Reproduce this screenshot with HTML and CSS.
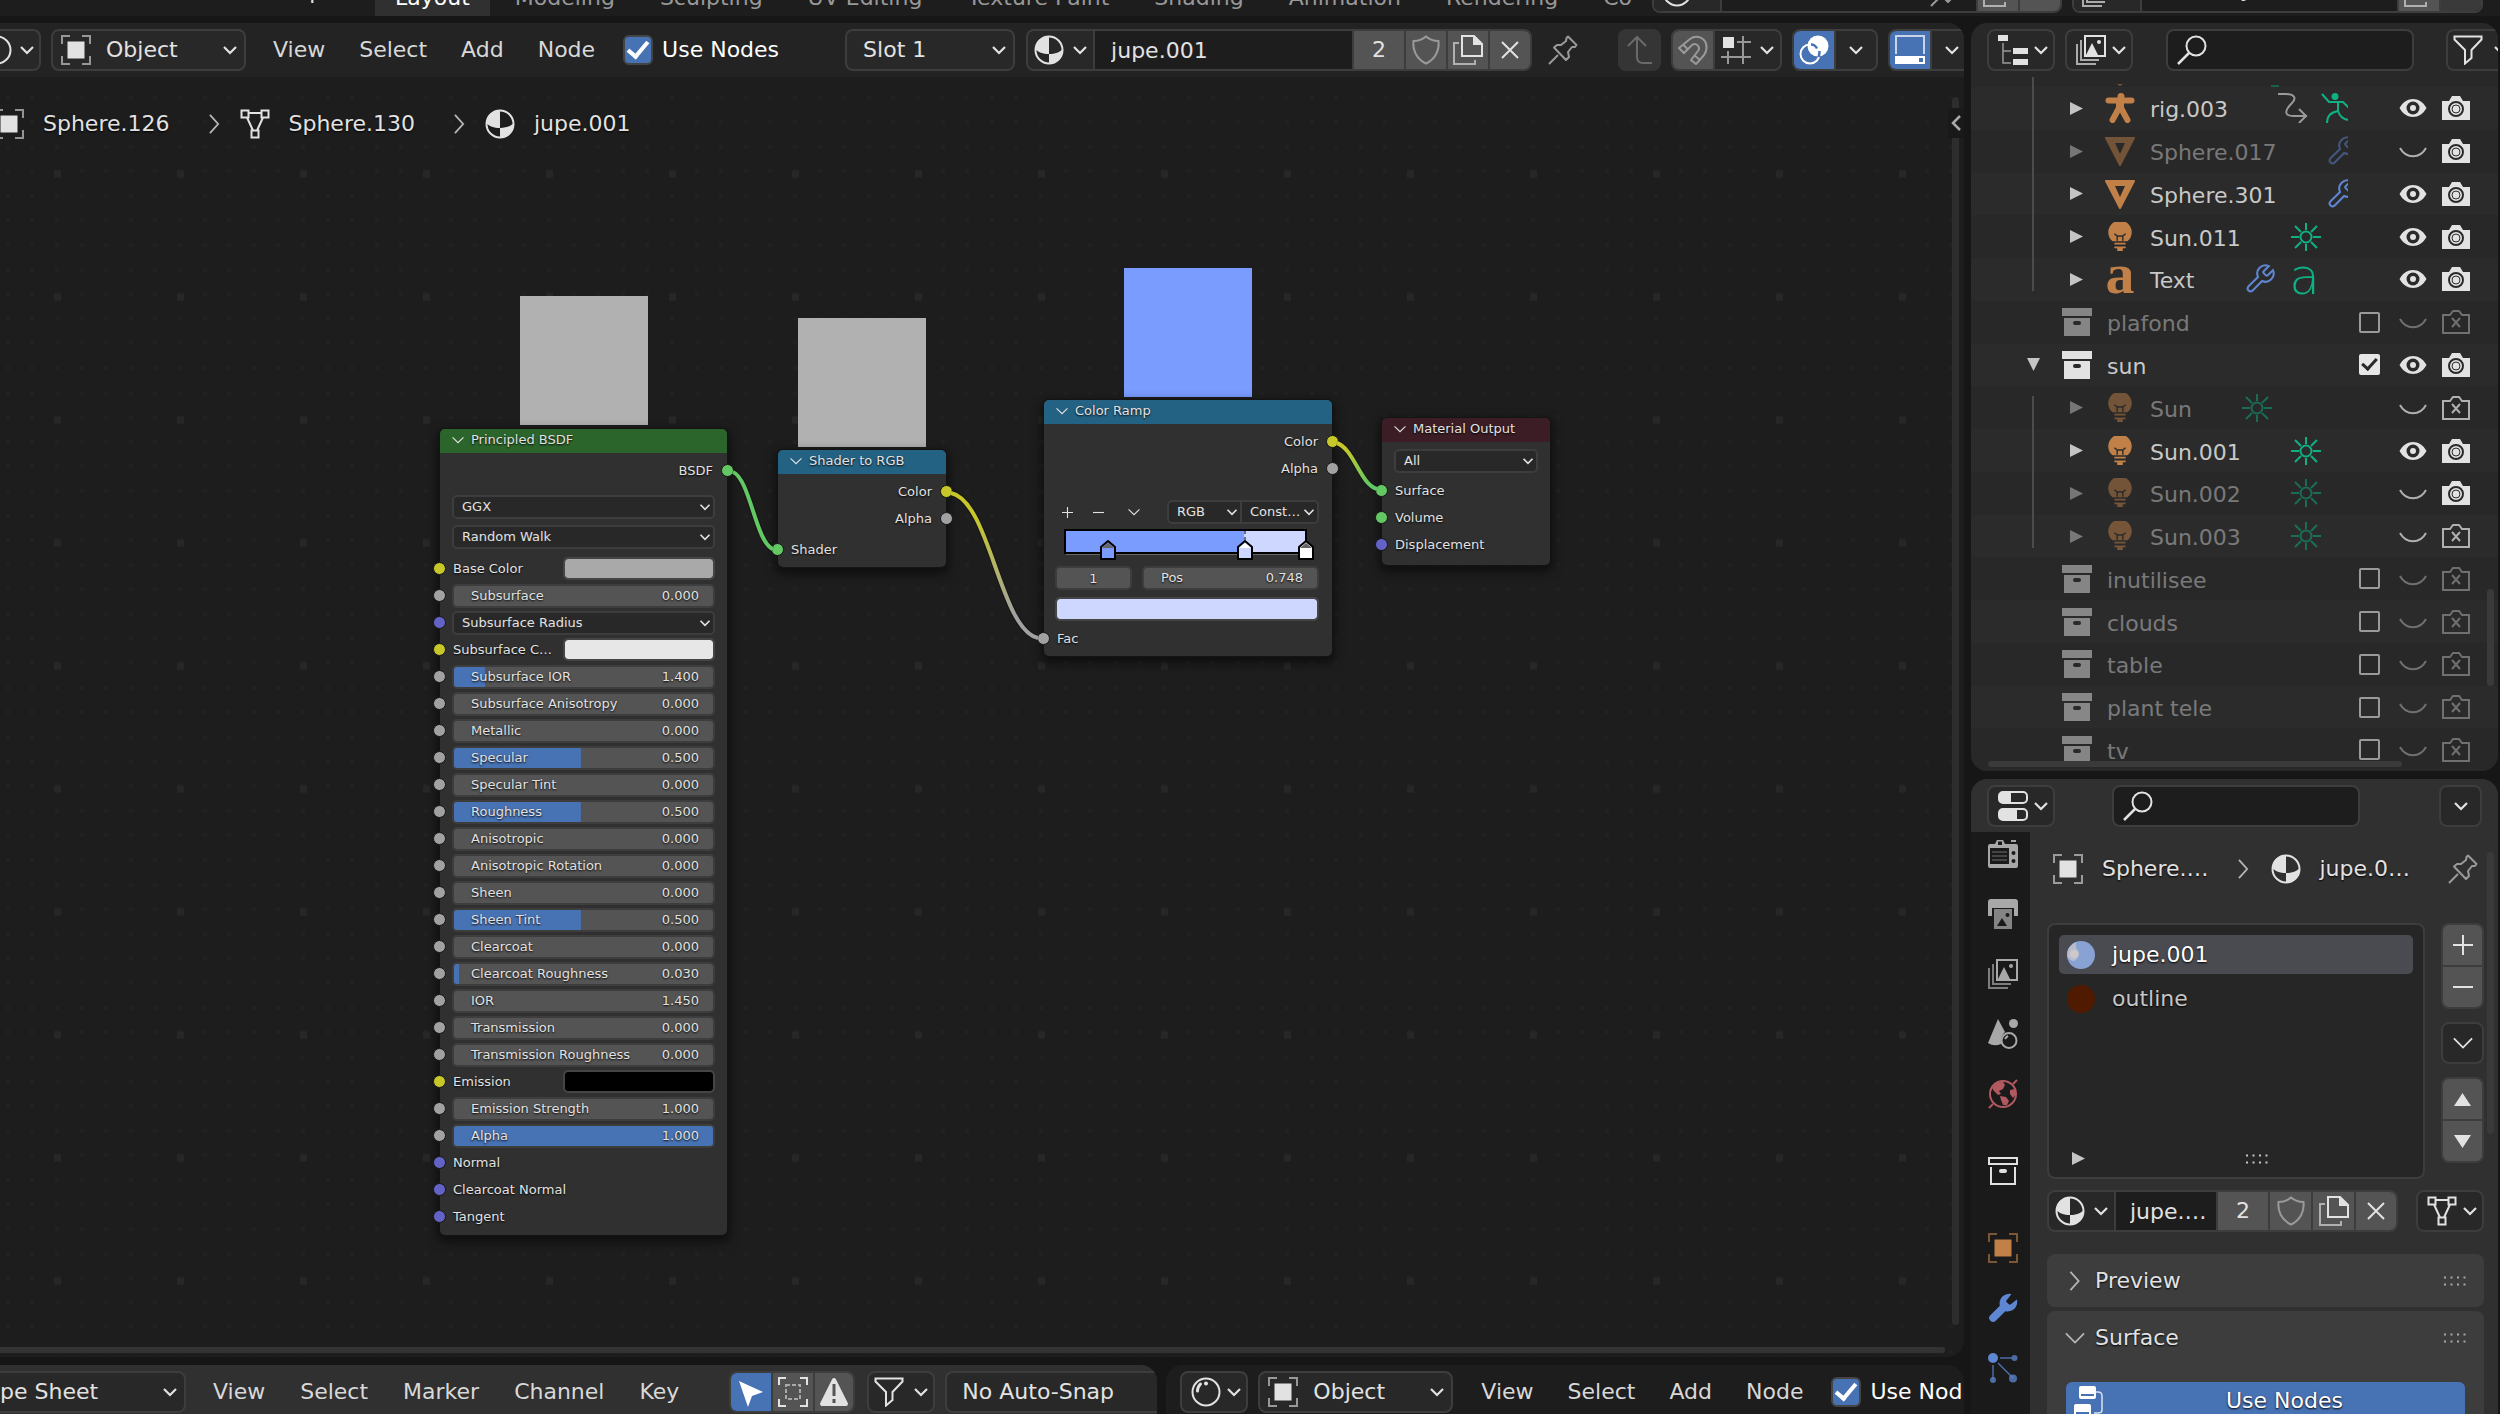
FILE: index.html
```html
<!DOCTYPE html>
<html lang="en">
<head>
<meta charset="utf-8">
<title>Shader Editor</title>
<link rel="stylesheet" href="styles.css">
</head>
<body>
<svg class="defs" aria-hidden="true">
  <symbol id="chev" viewBox="0 0 16 16"><path d="M2 5l6 6 6-6" fill="none" stroke="currentColor" stroke-width="2.2"/></symbol>
  <symbol id="chev-r" viewBox="0 0 12 22"><path d="M1 1l9 10-9 10" fill="none" stroke="currentColor" stroke-width="2"/></symbol>
  <symbol id="chev-l" viewBox="0 0 10 16"><path d="M9 1L2 8l7 7" fill="none" stroke="currentColor" stroke-width="2.5"/></symbol>
  <symbol id="chev-d" viewBox="0 0 22 12"><path d="M1 1l10 10L21 1" fill="none" stroke="currentColor" stroke-width="2"/></symbol>
  <symbol id="tri-r" viewBox="0 0 13 13"><path d="M0 0l13 6.500L0 13z" fill="currentColor"/></symbol>
  <symbol id="tri-d" viewBox="0 0 13 13"><path d="M0 0h13L6.500 13z" fill="currentColor"/></symbol>
  <symbol id="grip" viewBox="0 0 22 10"><path d="M0 1.500h22M0 8.500h22" stroke="currentColor" stroke-width="2" stroke-dasharray="2 4.500"/></symbol>
  <symbol id="obj" viewBox="0 0 30 30"><path d="M1 9V1h8M21 1h8v8M29 21v8h-8M9 29H1v-8" fill="none" stroke="currentColor" stroke-width="2" opacity=".6"/><path d="M6.500 6.500h17v17h-17z" fill="currentColor"/></symbol>
  <symbol id="mesh" viewBox="0 0 30 30"><path d="M1.500 1.500h7v7h-7zM21.500 1.500h7v7h-7zM11.500 21.500h7v7h-7zM8.500 4h13M7 8.500l6 13M23 8.500l-6 13" fill="none" stroke="currentColor" stroke-width="2"/></symbol>
  <symbol id="mat" viewBox="0 0 30 30"><circle cx="15" cy="15" r="13.500" fill="none" stroke="currentColor" stroke-width="2"/><path d="M15 1v18C9 19 4 17 1 14 2 6 8 1 15 1zM15 19c6 0 11-2 14-5 0 9-6 15-14 15z" fill="currentColor"/></symbol>
  <symbol id="sphere" viewBox="0 0 30 30"><circle cx="15" cy="15" r="13.500" fill="none" stroke="currentColor" stroke-width="2"/><path d="M6.500 14c0-3 1-5 3-7" fill="none" stroke="currentColor" stroke-width="3" stroke-linecap="round"/><circle cx="15" cy="6.500" r="2" fill="currentColor"/></symbol>
  <symbol id="shield" viewBox="0 0 30 30"><path d="M15 1.500C11 5 7 6 2.500 6c-1 9 3 18 12.500 22.500C24.500 24 28.500 15 27.500 6c-4.500 0-8.500-1-12.500-4.500z" fill="none" stroke="currentColor" stroke-width="2"/></symbol>
  <symbol id="copy" viewBox="0 0 30 30"><path d="M6 8H1v21h21v-4" fill="none" stroke="currentColor" stroke-width="2" opacity=".65"/><path d="M9 1h12l8 8v12H9z" fill="none" stroke="currentColor" stroke-width="2"/><path d="M20 0l10 10H20z" fill="currentColor"/></symbol>
  <symbol id="x" viewBox="0 0 30 30"><path d="M7 7l16 16M23 7L7 23" stroke="currentColor" stroke-width="2"/></symbol>
  <symbol id="pin" viewBox="0 0 30 30"><path d="M1 29l9-9M20 1.500l8.500 8.500-1.500 2h-3l-4 5 1 5-3 3L6 12.500 9 10h4l5-4 .500-3z" fill="none" stroke="currentColor" stroke-width="2" stroke-linejoin="round"/></symbol>
  <symbol id="up" viewBox="0 0 30 30"><path d="M12 2v20q0 6 6 6h9M3 11l9-9 9 9" fill="none" stroke="currentColor" stroke-width="2"/></symbol>
  <symbol id="magnet" viewBox="0 0 30 30"><path d="M1 13L12 4C19-1 29 3 28.500 13c0 5-3 8-10.500 16l-5-4 7-9c3-4-2-9-6-6l-8 8z" fill="none" stroke="currentColor" stroke-width="2"/><path d="M5 9.500l5 5M16.500 20.500l5 4" stroke="currentColor" stroke-width="2"/></symbol>
  <symbol id="snap" viewBox="0 0 30 30"><path d="M22 1v28M16 7h14M7 16v13M0 22h30" stroke="currentColor" stroke-width="2" opacity=".6"/><path d="M2 2h11v11H2z" fill="currentColor"/></symbol>
  <symbol id="overlay" viewBox="0 0 30 30"><circle cx="11" cy="19" r="9.500" fill="none" stroke="#fff" stroke-width="2"/><circle cx="19" cy="11" r="10.500" fill="#fff"/><path d="M12 9.500q4 0 6 4M20.500 16q0 4-1 6" fill="none" stroke="#4772b3" stroke-width="2.500"/></symbol>
  <symbol id="backdrop" viewBox="0 0 30 30"><path d="M1 19V1h28v18" fill="none" stroke="#fff" stroke-width="2" opacity=".7"/><path d="M0 21h30v8H0z" fill="#fff"/><path d="M24 23h4v4h-4z" fill="#4772b3"/></symbol>
  <symbol id="tree" viewBox="0 0 30 30"><path d="M5 8v20h8M5 16h8" fill="none" stroke="currentColor" stroke-width="1.500" opacity=".6"/><path d="M0 0h10v6H0zM15 13h15v6H15zM15 24h15v6H15z" fill="currentColor"/></symbol>
  <symbol id="imgs" viewBox="0 0 30 30"><path d="M5 5v20h18M1 9v20h19" fill="none" stroke="currentColor" stroke-width="2" opacity=".7"/><path d="M9 1h20v20H9z" fill="none" stroke="currentColor" stroke-width="2"/><path d="M10 20l6-12 6 12z" fill="currentColor"/><circle cx="23" cy="7" r="2" fill="currentColor"/></symbol>
  <symbol id="search" viewBox="0 0 30 30"><circle cx="19" cy="11" r="9.500" fill="none" stroke="currentColor" stroke-width="2"/><path d="M12.500 17.500L1 29" stroke="currentColor" stroke-width="2.500"/></symbol>
  <symbol id="funnel" viewBox="0 0 30 30"><path d="M1.500 1.500h27v3L18.500 15v8L12 28.500V15L1.500 4.500z" fill="none" stroke="currentColor" stroke-width="2"/></symbol>
  <symbol id="toggles" viewBox="0 0 30 30"><rect x="1" y="1" width="28" height="11" rx="4" fill="none" stroke="currentColor" stroke-width="2"/><path d="M5 1h8v11H5q-4 0-4-4V5q0-4 4-4zM5 18h14v11H5q-4 0-4-4v-3q0-4 4-4z" fill="currentColor"/><rect x="1" y="18" width="28" height="11" rx="4" fill="none" stroke="currentColor" stroke-width="2"/></symbol>
  <symbol id="eye" viewBox="0 0 30 30"><path d="M1.500 15C8 3 22 3 28.500 15 22 27 8 27 1.500 15z" fill="currentColor"/><circle cx="15" cy="15" r="6.500" fill="#2a2a2a"/><circle cx="15" cy="15" r="3" fill="currentColor"/></symbol>
  <symbol id="shut" viewBox="0 0 30 30"><path d="M2 12C8 23 22 23 28 12" fill="none" stroke="currentColor" stroke-width="2"/></symbol>
  <symbol id="cam" viewBox="0 0 30 30"><path d="M1 8h7l3-5h8l3 5h7v19H1z" fill="currentColor"/><circle cx="15" cy="16" r="7" fill="none" stroke="#2a2a2a" stroke-width="2"/><circle cx="15" cy="16" r="4" fill="none" stroke="#2a2a2a" stroke-width="1"/></symbol>
  <symbol id="camoff" viewBox="0 0 30 30"><path d="M2 8h7l3-4h6l3 4h7v18H2z" fill="none" stroke="currentColor" stroke-width="2"/><path d="M11 11l8 9M19 11l-8 9" stroke="currentColor" stroke-width="2"/></symbol>
  <symbol id="coll" viewBox="0 0 30 30"><path d="M0 1h30v8H0zM2 11h26v18H2z" fill="currentColor"/><rect x="11" y="14" width="8" height="4" rx="2" fill="#2a2a2a"/></symbol>
  <symbol id="coll-o" viewBox="0 0 30 30"><path d="M1 2h28v6H1zM3 11v17h24V11" fill="none" stroke="currentColor" stroke-width="2"/><rect x="11" y="13" width="8" height="4" rx="2" fill="currentColor"/></symbol>
  <symbol id="bulb" viewBox="0 0 30 32"><path d="M7 20.500A12.500 12.500 0 1 1 23 20.500zM9 22h12v2H9zM9 26h12v2H9zM12 28h6v3h-6z" fill="currentColor"/><path d="M9 12.500l3 2.500h6l3-2.500M12 14v6M18 14v6" fill="none" stroke="#2a2a2a" stroke-width="1.500"/></symbol>
  <symbol id="sun" viewBox="0 0 30 30"><circle cx="15" cy="15" r="5.500" fill="none" stroke="currentColor" stroke-width="2"/><path d="M15 8V1M15 22v7M8 15H0M22 15h8M10 10L4 4M20 10l6-6M10 20l-6 6M20 20l6 6" stroke="currentColor" stroke-width="2"/></symbol>
  <symbol id="wrench" viewBox="1 1 22 22"><path d="M14.700 6.300a1 1 0 0 0 0 1.400l1.600 1.600a1 1 0 0 0 1.400 0l3.770-3.770a6 6 0 0 1-7.940 7.940l-6.910 6.910a2.120 2.120 0 0 1-3-3l6.910-6.910a6 6 0 0 1 7.940-7.940l-3.760 3.760z" fill="none" stroke="currentColor" stroke-width="1.500"/></symbol>
  <symbol id="wrench-f" viewBox="1 1 22 22"><path d="M14.700 6.300a1 1 0 0 0 0 1.400l1.600 1.600a1 1 0 0 0 1.400 0l4.500-3.500a7 7 0 0 1-8.500 8.500l-7 7a2.600 2.600 0 0 1-4-4l7-7a7 7 0 0 1 8.500-8.500z" fill="currentColor"/></symbol>
  <symbol id="cone" viewBox="0 0 30 30"><path d="M1 2h28L15 29z" fill="currentColor" stroke="currentColor" stroke-width="2" stroke-linejoin="round"/><path d="M10 7h10l-5 11z" fill="#2a2a2a"/></symbol>
  <symbol id="rig" viewBox="0 0 30 30"><circle cx="16" cy="3.500" r="3.500" fill="currentColor"/><path d="M3.500 7.500h23" stroke="currentColor" stroke-width="6" stroke-linecap="round"/><path d="M11 8h8v9h-8z" fill="currentColor"/><path d="M14 15L7.500 27M16 15l6.500 12" stroke="currentColor" stroke-width="6" stroke-linecap="round"/></symbol>
  <symbol id="pose" viewBox="0 0 30 30"><circle cx="14" cy="3.500" r="3.500" fill="currentColor"/><path d="M1 1l7 8h9l5 0 7 7M17 9v9Q6 20 6 30M17 18q3 9 12 9" fill="none" stroke="currentColor" stroke-width="2"/></symbol>
  <symbol id="path" viewBox="0 0 30 30"><path d="M0 1h8c8 0 11 4 6 9-8 8-8 13 2 13h13M21 16l7 7-7 7" fill="none" stroke="currentColor" stroke-width="2"/></symbol>
  <symbol id="cursor" viewBox="0 0 30 30"><path d="M3 4l24 11-11 4-4 11z" fill="#fff"/></symbol>
  <symbol id="dashed" viewBox="0 0 30 30"><path d="M1 8V1h7M22 1h7v7M29 22v7h-7M8 29H1v-7" fill="none" stroke="currentColor" stroke-width="2"/><path d="M8 8h14v14H8z" fill="none" stroke="currentColor" stroke-width="2" stroke-dasharray="4 2" opacity=".6"/></symbol>
  <symbol id="warn" viewBox="0 0 30 30"><path d="M15 3L3 27h24z" fill="currentColor" stroke="currentColor" stroke-width="4" stroke-linejoin="round"/><path d="M15 7v12M15 22v4" stroke="#545454" stroke-width="3"/></symbol>
  <symbol id="render" viewBox="0 0 30 30"><path d="M2 5h5l2-4h6l2 4h11q2 0 2 2v20q0 2-2 2H2q-2 0-2-2V7q0-2 2-2zM23 1h5v2h-5z" fill="currentColor"/><path d="M2 9h19v16H2zM10 2.500h4V6h-4z" fill="#1a1a1a"/><path d="M4 13h15M4 17h15M4 21h15" stroke="currentColor" stroke-width="1" opacity=".6"/><circle cx="25.500" cy="14" r="2" fill="#1a1a1a"/><circle cx="25.500" cy="22" r="2" fill="#1a1a1a"/></symbol>
  <symbol id="print" viewBox="0 0 30 30"><path d="M3 0h24q3 0 3 3v14h-4V9H4v8H0V3q0-3 3-3z" fill="currentColor"/><path d="M6 10h18v20H6z" fill="currentColor" opacity=".75"/><path d="M9 27l5-8 5 8z" fill="#1a1a1a"/><circle cx="19.500" cy="16" r="2" fill="#1a1a1a"/></symbol>
  <symbol id="scene" viewBox="0 0 30 30"><path d="M10 0l7 13q-5 4-4 12-7 3-13-1z" fill="currentColor"/><circle cx="25.500" cy="4.500" r="4.500" fill="currentColor"/><circle cx="21" cy="21.500" r="7.500" fill="none" stroke="currentColor" stroke-width="2"/><path d="M17 20q1-2 3-3" stroke="currentColor" stroke-width="2" fill="none"/></symbol>
  <symbol id="world" viewBox="0 0 30 30"><circle cx="15" cy="15" r="13" fill="none" stroke="currentColor" stroke-width="2"/><path d="M25 5l4-4M5 25l-4 4" stroke="currentColor" stroke-width="2"/><path d="M4 9Q8 2 15 3l2 3-2 4-4 2 2 3-3 1-4-4zM12 17l6 1 3 4-2 4h-4l-2-5zM22 11l5-1 1 5-3 4-3-4z" fill="currentColor"/></symbol>
  <symbol id="parts" viewBox="0 0 30 30"><path d="M12 5h12M5 12v14M10 10l15 15" stroke="currentColor" stroke-width="1.500" opacity=".75"/><circle cx="5" cy="5" r="5" fill="currentColor"/><g fill="currentColor" opacity=".75"><circle cx="26.500" cy="5" r="3"/><circle cx="5" cy="27" r="3"/><circle cx="25" cy="25.500" r="4"/></g></symbol>
  <symbol id="nodes" viewBox="0 0 30 30"><path d="M22 6h2q4 0 4 4v14q0 3-4 3h-4" fill="none" stroke="#fff" stroke-width="1.500" opacity=".8"/><rect x="5" y="0" width="17" height="13" rx="2" fill="#fff"/><rect x="0" y="18" width="17" height="13" rx="2" fill="#fff"/><path d="M7 9h13M2 27h13" stroke="#4772b3" stroke-width="2"/></symbol>
  <symbol id="plus" viewBox="0 0 20 20"><path d="M10 0v20M0 10h20" stroke="currentColor" stroke-width="2"/></symbol>
  <symbol id="minus" viewBox="0 0 20 20"><path d="M0 10h20" stroke="currentColor" stroke-width="2"/></symbol>
</svg>

<header class="topbar">
  <nav class="workspaces" aria-label="Workspaces">
    <button class="menu-help">Help</button>
    <button class="tab tab-on">Layout</button>
    <button class="tab">Modeling</button>
    <button class="tab">Sculpting</button>
    <button class="tab">UV Editing</button>
    <button class="tab">Texture Paint</button>
    <button class="tab">Shading</button>
    <button class="tab">Animation</button>
    <button class="tab">Rendering</button>
    <button class="tab">Co</button>
  </nav>
  <div class="top-group scene-group">
    <button class="cell cell-icon" aria-label="Browse scene"><svg class="icon"><use href="#sphere"/></svg></button>
    <span class="cell cell-dark cell-grow cell-end"><svg class="icon dim"><use href="#pin"/></svg></span>
    <button class="cell cell-gray" aria-label="New scene"><svg class="icon"><use href="#copy"/></svg></button>
    <button class="cell cell-gray" aria-label="Delete scene"></button>
  </div>
  <div class="top-group layer-group">
    <button class="cell cell-icon" aria-label="Browse view layer"><svg class="icon"><use href="#imgs"/></svg></button>
    <span class="cell cell-dark cell-grow cell-text">ViewLayer</span>
    <button class="cell cell-gray" aria-label="New view layer"><svg class="icon"><use href="#copy"/></svg></button>
    <button class="cell cell-off" aria-label="Remove view layer"></button>
  </div>
</header>

<div class="workspace">
  <main class="left">
    <section class="editor" aria-label="Shader editor">
      <div class="bar">
        <button class="box type-cut" aria-label="Editor type"><svg class="icon"><use href="#sphere"/></svg><svg class="chev"><use href="#chev"/></svg></button>
        <div class="box drop object-drop"><svg class="icon"><use href="#obj"/></svg><select aria-label="Shader type"><option>Object</option></select><svg class="chev"><use href="#chev"/></svg></div>
        <nav class="menus"><button>View</button><button>Select</button><button>Add</button><button>Node</button></nav>
        <label class="check"><input type="checkbox" checked>Use Nodes</label>
        <div class="box drop slot-drop"><select aria-label="Slot"><option>Slot 1</option></select><svg class="chev"><use href="#chev"/></svg></div>
        <div class="box group mat-group">
          <button class="c66" aria-label="Browse material"><svg class="icon"><use href="#mat"/></svg><svg class="chev"><use href="#chev"/></svg></button>
          <input type="text" value="jupe.001" aria-label="Material name">
          <button class="gray c52">2</button>
          <button class="gray c42 dim" aria-label="Fake user"><svg class="icon"><use href="#shield"/></svg></button>
          <button class="gray c42" aria-label="New material"><svg class="icon"><use href="#copy"/></svg></button>
          <button class="gray c42" aria-label="Unlink"><svg class="icon"><use href="#x"/></svg></button>
        </div>
        <button class="plain pin-btn" aria-label="Pin"><svg class="icon"><use href="#pin"/></svg></button>
        <button class="box sq off" aria-label="Parent node tree"><svg class="icon"><use href="#up"/></svg></button>
        <div class="box group snap-group">
          <button class="gray c40 dim" aria-label="Snap"><svg class="icon"><use href="#magnet"/></svg></button>
          <button class="rest" aria-label="Snap to"><svg class="icon"><use href="#snap"/></svg><svg class="chev"><use href="#chev"/></svg></button>
        </div>
        <div class="box group over-group">
          <button class="blue c40" aria-label="Overlays"><svg class="icon"><use href="#overlay"/></svg></button>
          <button class="rest" aria-label="Overlay options"><svg class="chev"><use href="#chev"/></svg></button>
        </div>
        <div class="box group back-group">
          <button class="blue c40" aria-label="Backdrop"><svg class="icon"><use href="#backdrop"/></svg></button>
          <button class="rest" aria-label="Backdrop options"><svg class="chev"><use href="#chev"/></svg></button>
        </div>
      </div>

      <div class="canvas">
        <svg class="grid" aria-hidden="true">
          <defs>
            <pattern id="dots" width="123" height="123" patternUnits="userSpaceOnUse">
              <path id="dotrow" d="M55 94h4M80 94h4M104 94h4M6 94h4M30 94h4" stroke="#212121" stroke-width="4"/>
              <use href="#dotrow" y="-24"/><use href="#dotrow" y="-49"/><use href="#dotrow" y="-74"/><use href="#dotrow" y="25"/>
              <path d="M54 97h7" stroke="#272727" stroke-width="7"/>
            </pattern>
            <linearGradient id="yellow-gray" gradientUnits="userSpaceOnUse" x1="946" y1="415" x2="1043" y2="562"><stop offset=".2" stop-color="#c7c729"/><stop offset=".8" stop-color="#a1a1a1"/></linearGradient>
            <linearGradient id="yellow-green" gradientUnits="userSpaceOnUse" x1="1332" y1="365" x2="1382" y2="413"><stop offset=".2" stop-color="#c7c729"/><stop offset=".8" stop-color="#63c763"/></linearGradient>
          </defs>
          <rect width="100%" height="100%" fill="url(#dots)"/>
        </svg>

        <nav class="crumbs" aria-label="Path">
          <svg class="icon"><use href="#obj"/></svg><span>Sphere.126</span><svg class="sep"><use href="#chev-r"/></svg>
          <svg class="icon"><use href="#mesh"/></svg><span>Sphere.130</span><svg class="sep"><use href="#chev-r"/></svg>
          <svg class="icon"><use href="#mat"/></svg><span>jupe.001</span>
        </nav>

        <div class="preview preview-a"></div>
        <div class="preview preview-b"></div>
        <div class="preview preview-c"></div>

        <article class="node principled">
          <h2 class="green"><svg><use href="#chev-d"/></svg>Principled BSDF</h2>
          <div class="row out">BSDF<i class="sock so g"></i></div>
          <div class="pick tall first"><select aria-label="Distribution"><option>GGX</option></select><svg><use href="#chev"/></svg></div>
          <div class="pick tall"><select aria-label="Subsurface method"><option>Random Walk</option></select><svg><use href="#chev"/></svg></div>
          <div class="inputs">
            <div class="row"><i class="sock y"></i><label for="bc">Base Color</label><input id="bc" type="color" value="#a9a9a9"></div>
            <div class="row"><i class="sock"></i><div class="field" style="--v:0%"><input id="f1" type="range"><label for="f1">Subsurface</label><output>0.000</output></div></div>
            <div class="row"><i class="sock v"></i><div class="pick"><select aria-label="Subsurface Radius"><option>Subsurface Radius</option></select><svg><use href="#chev"/></svg></div></div>
            <div class="row"><i class="sock y"></i><label for="sc">Subsurface C…</label><input id="sc" type="color" value="#e7e7e7"></div>
            <div class="row"><i class="sock"></i><div class="field" style="--v:12%"><input id="f2" type="range"><label for="f2">Subsurface IOR</label><output>1.400</output></div></div>
            <div class="row"><i class="sock"></i><div class="field" style="--v:0%"><input id="f3" type="range"><label for="f3">Subsurface Anisotropy</label><output>0.000</output></div></div>
            <div class="row"><i class="sock"></i><div class="field" style="--v:0%"><input id="f4" type="range"><label for="f4">Metallic</label><output>0.000</output></div></div>
            <div class="row"><i class="sock"></i><div class="field" style="--v:49%"><input id="f5" type="range"><label for="f5">Specular</label><output>0.500</output></div></div>
            <div class="row"><i class="sock"></i><div class="field" style="--v:0%"><input id="f6" type="range"><label for="f6">Specular Tint</label><output>0.000</output></div></div>
            <div class="row"><i class="sock"></i><div class="field" style="--v:49%"><input id="f7" type="range"><label for="f7">Roughness</label><output>0.500</output></div></div>
            <div class="row"><i class="sock"></i><div class="field" style="--v:0%"><input id="f8" type="range"><label for="f8">Anisotropic</label><output>0.000</output></div></div>
            <div class="row"><i class="sock"></i><div class="field" style="--v:0%"><input id="f9" type="range"><label for="f9">Anisotropic Rotation</label><output>0.000</output></div></div>
            <div class="row"><i class="sock"></i><div class="field" style="--v:0%"><input id="f10" type="range"><label for="f10">Sheen</label><output>0.000</output></div></div>
            <div class="row"><i class="sock"></i><div class="field" style="--v:49%"><input id="f11" type="range"><label for="f11">Sheen Tint</label><output>0.500</output></div></div>
            <div class="row"><i class="sock"></i><div class="field" style="--v:0%"><input id="f12" type="range"><label for="f12">Clearcoat</label><output>0.000</output></div></div>
            <div class="row"><i class="sock"></i><div class="field" style="--v:2%"><input id="f13" type="range"><label for="f13">Clearcoat Roughness</label><output>0.030</output></div></div>
            <div class="row"><i class="sock"></i><div class="field" style="--v:0%"><input id="f14" type="range"><label for="f14">IOR</label><output>1.450</output></div></div>
            <div class="row"><i class="sock"></i><div class="field" style="--v:0%"><input id="f15" type="range"><label for="f15">Transmission</label><output>0.000</output></div></div>
            <div class="row"><i class="sock"></i><div class="field" style="--v:0%"><input id="f16" type="range"><label for="f16">Transmission Roughness</label><output>0.000</output></div></div>
            <div class="row"><i class="sock y"></i><label for="em">Emission</label><input id="em" type="color" value="#000000"></div>
            <div class="row"><i class="sock"></i><div class="field" style="--v:0%"><input id="f17" type="range"><label for="f17">Emission Strength</label><output>1.000</output></div></div>
            <div class="row"><i class="sock"></i><div class="field" style="--v:100%"><input id="f18" type="range"><label for="f18">Alpha</label><output>1.000</output></div></div>
            <div class="row"><i class="sock v"></i>Normal</div>
            <div class="row"><i class="sock v"></i>Clearcoat Normal</div>
            <div class="row"><i class="sock v"></i>Tangent</div>
          </div>
        </article>

        <article class="node torgb">
          <h2 class="teal"><svg><use href="#chev-d"/></svg>Shader to RGB</h2>
          <div class="row out">Color<i class="sock so y"></i></div>
          <div class="row out">Alpha<i class="sock so"></i></div>
          <div class="inputs"><div class="row"><i class="sock g"></i>Shader</div></div>
        </article>

        <article class="node ramp">
          <h2 class="teal"><svg><use href="#chev-d"/></svg>Color Ramp</h2>
          <div class="row out">Color<i class="sock so y"></i></div>
          <div class="row out">Alpha<i class="sock so"></i></div>
          <div class="ramp-tools">
            <button aria-label="Add stop"><svg><use href="#plus"/></svg></button>
            <button aria-label="Remove stop"><svg><use href="#minus"/></svg></button>
            <button aria-label="Ramp tools"><svg class="flat"><use href="#chev-d"/></svg></button>
            <div class="pick join-l"><select aria-label="Color mode"><option>RGB</option></select><svg><use href="#chev"/></svg></div>
            <div class="pick join-r"><select aria-label="Interpolation"><option>Const…</option></select><svg><use href="#chev"/></svg></div>
          </div>
          <svg class="ramp-band" viewBox="0 0 264 32" role="img" aria-label="Color ramp">
            <path d="M11 1h241v24H11z" fill="#7a9cff"/><path d="M190 1h62v24h-62z" fill="#ced7ff"/>
            <path d="M11 1h241v23H11z" fill="none" stroke="#000" stroke-width="2"/><path d="M12 25.500h240" stroke="#666"/>
            <path d="M191 2v10" stroke="#000" stroke-dasharray="3 3"/>
            <g stroke="#000" stroke-width="2" stroke-linejoin="round">
              <path d="M47 18l7-6 7 6v12H47z" fill="#7a9cff"/><path d="M184 18l7-6 7 6v12h-14z" fill="#ced7ff"/><path d="M245 18l7-6 7 6v12h-14z" fill="#fff"/>
            </g>
            <path d="M48 19l6-5 6 5zM246 19l6-5 6 5z" fill="#666"/><path d="M185 19l6-5 6 5z" fill="#fff"/>
          </svg>
          <div class="ramp-fields">
            <input class="num" type="text" value="1" aria-label="Stop index">
            <div class="field" style="--v:0%"><input id="pos" type="range"><label for="pos">Pos</label><output>0.748</output></div>
          </div>
          <input class="wide" type="color" value="#ced7ff" aria-label="Stop color">
          <div class="row"><i class="sock"></i>Fac</div>
        </article>

        <article class="node output">
          <h2 class="red"><svg><use href="#chev-d"/></svg>Material Output</h2>
          <div class="pick tall"><select aria-label="Target"><option>All</option></select><svg><use href="#chev"/></svg></div>
          <div class="row"><i class="sock g"></i>Surface</div>
          <div class="row"><i class="sock g"></i>Volume</div>
          <div class="row"><i class="sock v"></i>Displacement</div>
        </article>

        <svg class="links" aria-hidden="true">
          <g fill="none" stroke="#111" stroke-width="6" opacity=".6">
            <path d="M733 395C750 402 756 466 773 472"/><path d="M951 416C990 424 1000 553 1038 561"/><path d="M1337 366C1354 372 1360 407 1377 412"/>
          </g>
          <g fill="none" stroke-width="4">
            <path d="M733 395C750 402 756 466 773 472" stroke="#63c763"/>
            <path d="M951 416C990 424 1000 553 1038 561" stroke="url(#yellow-gray)"/>
            <path d="M1337 366C1354 372 1360 407 1377 412" stroke="url(#yellow-green)"/>
          </g>
        </svg>

        <button class="side-tab" aria-label="Show sidebar"><svg><use href="#chev-l"/></svg></button>
        <div class="scroll-v"></div>
        <div class="scroll-h"></div>
      </div>
    </section>

    <div class="bottom">
      <section class="bar dope" aria-label="Dope sheet">
        <div class="box drop dope-drop"><select aria-label="Mode"><option>pe Sheet</option></select><svg class="chev"><use href="#chev"/></svg></div>
        <nav class="menus"><button>View</button><button>Select</button><button>Marker</button><button>Channel</button><button>Key</button></nav>
        <div class="box group filter-group">
          <button class="blue c40" aria-label="Only selected"><svg class="icon"><use href="#cursor"/></svg></button>
          <button class="gray c42" aria-label="Show hidden"><svg class="icon"><use href="#dashed"/></svg></button>
          <button class="gray rest" aria-label="Only errors"><svg class="icon"><use href="#warn"/></svg></button>
        </div>
        <button class="box type funnel-btn" aria-label="Filter"><svg class="icon"><use href="#funnel"/></svg><svg class="chev"><use href="#chev"/></svg></button>
        <div class="box drop auto-drop"><select aria-label="Auto snap"><option>No Auto-Snap</option></select></div>
      </section>
      <section class="bar shader2" aria-label="Second shader editor">
        <button class="box type" aria-label="Editor type"><svg class="icon"><use href="#sphere"/></svg><svg class="chev"><use href="#chev"/></svg></button>
        <div class="box drop object-drop"><svg class="icon"><use href="#obj"/></svg><select aria-label="Shader type"><option>Object</option></select><svg class="chev"><use href="#chev"/></svg></div>
        <nav class="menus"><button>View</button><button>Select</button><button>Add</button><button>Node</button></nav>
        <label class="check"><input type="checkbox" checked>Use Nod</label>
      </section>
    </div>
  </main>

  <aside class="right">
    <section class="outliner" aria-label="Outliner">
      <div class="bar">
        <button class="box type" aria-label="Editor type"><svg class="icon"><use href="#tree"/></svg><svg class="chev"><use href="#chev"/></svg></button>
        <button class="box type" aria-label="Display mode"><svg class="icon"><use href="#imgs"/></svg><svg class="chev"><use href="#chev"/></svg></button>
        <label class="box search"><svg class="icon"><use href="#search"/></svg><input type="search" aria-label="Search outliner"></label>
        <button class="box type-end" aria-label="Filter"><svg class="icon"><use href="#funnel"/></svg><svg class="chev"><use href="#chev"/></svg></button>
      </div>
      <ul class="tree">
        <li class="child cut"><svg viewBox="0 0 200 3"><path d="M12 0h6l-3 2z" fill="#7a5236"/><path d="M166 1h8v2h-8z" fill="#17614d"/></svg></li>
        <li class="child"><div class="name"><svg class="tog"><use href="#tri-r"/></svg><svg class="icon orange"><use href="#rig"/></svg><span>rig.003</span><svg class="icon extra dim"><use href="#path"/></svg><svg class="icon mint"><use href="#pose"/></svg></div><i></i><svg class="icon"><use href="#eye"/></svg><svg class="icon"><use href="#cam"/></svg></li>
        <li class="child faded"><div class="name"><svg class="tog"><use href="#tri-r"/></svg><svg class="icon orange"><use href="#cone"/></svg><span>Sphere.017</span><svg class="icon extra azure"><use href="#wrench"/></svg></div><i></i><svg class="icon mid"><use href="#shut"/></svg><svg class="icon"><use href="#cam"/></svg></li>
        <li class="child"><div class="name"><svg class="tog"><use href="#tri-r"/></svg><svg class="icon orange"><use href="#cone"/></svg><span>Sphere.301</span><svg class="icon extra azure"><use href="#wrench"/></svg></div><i></i><svg class="icon"><use href="#eye"/></svg><svg class="icon"><use href="#cam"/></svg></li>
        <li class="child"><div class="name"><svg class="tog"><use href="#tri-r"/></svg><svg class="icon orange"><use href="#bulb"/></svg><span>Sun.011</span><svg class="icon extra mint"><use href="#sun"/></svg></div><i></i><svg class="icon"><use href="#eye"/></svg><svg class="icon"><use href="#cam"/></svg></li>
        <li class="child last"><div class="name"><svg class="tog"><use href="#tri-r"/></svg><b class="icon glyph orange">a</b><span>Text</span><svg class="icon extra azure"><use href="#wrench"/></svg><b class="icon glyph thin mint">a</b></div><i></i><svg class="icon"><use href="#eye"/></svg><svg class="icon"><use href="#cam"/></svg></li>
        <li class="faded"><div class="name"><svg class="tog"></svg><svg class="icon"><use href="#coll"/></svg><span>plafond</span></div><input type="checkbox" aria-label="plafond"><svg class="icon low"><use href="#shut"/></svg><svg class="icon low"><use href="#camoff"/></svg></li>
        <li><div class="name"><svg class="tog"><use href="#tri-d"/></svg><svg class="icon"><use href="#coll"/></svg><span>sun</span></div><input type="checkbox" checked aria-label="sun"><svg class="icon"><use href="#eye"/></svg><svg class="icon"><use href="#cam"/></svg></li>
        <li class="child start faded"><div class="name"><svg class="tog"><use href="#tri-r"/></svg><svg class="icon orange"><use href="#bulb"/></svg><span>Sun</span><svg class="icon extra mint"><use href="#sun"/></svg></div><i></i><svg class="icon mid"><use href="#shut"/></svg><svg class="icon mid"><use href="#camoff"/></svg></li>
        <li class="child"><div class="name"><svg class="tog"><use href="#tri-r"/></svg><svg class="icon orange"><use href="#bulb"/></svg><span>Sun.001</span><svg class="icon extra mint"><use href="#sun"/></svg></div><i></i><svg class="icon"><use href="#eye"/></svg><svg class="icon"><use href="#cam"/></svg></li>
        <li class="child faded"><div class="name"><svg class="tog"><use href="#tri-r"/></svg><svg class="icon orange"><use href="#bulb"/></svg><span>Sun.002</span><svg class="icon extra mint"><use href="#sun"/></svg></div><i></i><svg class="icon mid"><use href="#shut"/></svg><svg class="icon"><use href="#cam"/></svg></li>
        <li class="child last faded"><div class="name"><svg class="tog"><use href="#tri-r"/></svg><svg class="icon orange"><use href="#bulb"/></svg><span>Sun.003</span><svg class="icon extra mint"><use href="#sun"/></svg></div><i></i><svg class="icon mid"><use href="#shut"/></svg><svg class="icon mid"><use href="#camoff"/></svg></li>
        <li class="faded"><div class="name"><svg class="tog"></svg><svg class="icon"><use href="#coll"/></svg><span>inutilisee</span></div><input type="checkbox" aria-label="inutilisee"><svg class="icon low"><use href="#shut"/></svg><svg class="icon low"><use href="#camoff"/></svg></li>
        <li class="faded"><div class="name"><svg class="tog"></svg><svg class="icon"><use href="#coll"/></svg><span>clouds</span></div><input type="checkbox" aria-label="clouds"><svg class="icon low"><use href="#shut"/></svg><svg class="icon low"><use href="#camoff"/></svg></li>
        <li class="faded"><div class="name"><svg class="tog"></svg><svg class="icon"><use href="#coll"/></svg><span>table</span></div><input type="checkbox" aria-label="table"><svg class="icon low"><use href="#shut"/></svg><svg class="icon low"><use href="#camoff"/></svg></li>
        <li class="faded"><div class="name"><svg class="tog"></svg><svg class="icon"><use href="#coll"/></svg><span>plant tele</span></div><input type="checkbox" aria-label="plant tele"><svg class="icon low"><use href="#shut"/></svg><svg class="icon low"><use href="#camoff"/></svg></li>
        <li class="faded"><div class="name"><svg class="tog"></svg><svg class="icon"><use href="#coll"/></svg><span>tv</span></div><input type="checkbox" aria-label="tv"><svg class="icon low"><use href="#shut"/></svg><svg class="icon low"><use href="#camoff"/></svg></li>
      </ul>
      <div class="scroll-v"></div>
      <div class="scroll-h"></div>
    </section>

    <section class="props" aria-label="Properties">
      <div class="bar">
        <button class="box type" aria-label="Editor type"><svg class="icon"><use href="#toggles"/></svg><svg class="chev"><use href="#chev"/></svg></button>
        <label class="box search"><svg class="icon"><use href="#search"/></svg><input type="search" aria-label="Search properties"></label>
        <button class="box sq" aria-label="Options"><svg class="chev"><use href="#chev"/></svg></button>
      </div>
      <div class="props-body">
        <nav class="tabs" aria-label="Property tabs">
          <button aria-label="Render"><svg class="icon"><use href="#render"/></svg></button>
          <button aria-label="Output"><svg class="icon"><use href="#print"/></svg></button>
          <button aria-label="View layer"><svg class="icon"><use href="#imgs"/></svg></button>
          <button aria-label="Scene"><svg class="icon"><use href="#scene"/></svg></button>
          <button class="rose" aria-label="World"><svg class="icon"><use href="#world"/></svg></button>
          <button class="apart white" aria-label="Collection"><svg class="icon"><use href="#coll-o"/></svg></button>
          <button class="apart orange" aria-label="Object"><svg class="icon"><use href="#obj"/></svg></button>
          <button class="azure" aria-label="Modifiers"><svg class="icon"><use href="#wrench-f"/></svg></button>
          <button class="azure" aria-label="Particles"><svg class="icon"><use href="#parts"/></svg></button>
        </nav>
        <div class="panelset">
          <nav class="crumbs" aria-label="Context">
            <svg class="icon"><use href="#obj"/></svg><span>Sphere.…</span><svg class="sep"><use href="#chev-r"/></svg>
            <svg class="icon"><use href="#mat"/></svg><span>jupe.0…</span>
            <button class="plain" aria-label="Pin"><svg class="icon"><use href="#pin"/></svg></button>
          </nav>
          <div class="slots">
            <div class="box list">
              <ul>
                <li class="on"><svg viewBox="0 0 28 28"><circle cx="14" cy="14" r="14" fill="#88a2d4"/><path d="M9 1Q0 5 0 15q3 5 7 5 6-3 5-9-4-4-3-10z" fill="#b8bccd"/><circle cx="7" cy="13" r="4" fill="#ccc8cc"/></svg>jupe.001</li>
                <li><svg viewBox="0 0 28 28"><circle cx="14" cy="14" r="14" fill="#501a00"/></svg>outline</li>
              </ul>
              <div class="list-foot"><svg class="tog"><use href="#tri-r"/></svg><svg class="grip"><use href="#grip"/></svg></div>
            </div>
            <div class="side">
              <div class="box stack"><button aria-label="Add slot"><svg class="s20"><use href="#plus"/></svg></button><button aria-label="Remove slot"><svg class="s20"><use href="#minus"/></svg></button></div>
              <button class="box sq" aria-label="Slot options"><svg class="s20"><use href="#chev-d"/></svg></button>
              <div class="box stack"><button aria-label="Move up"><svg class="s17" viewBox="0 0 17 13"><path d="M0 13h17L8.500 0z" fill="currentColor"/></svg></button><button aria-label="Move down"><svg class="s17" viewBox="0 0 17 13"><path d="M0 0h17L8.500 13z" fill="currentColor"/></svg></button></div>
            </div>
          </div>
          <div class="datablock">
            <div class="box group">
              <button class="c65" aria-label="Browse material"><svg class="icon"><use href="#mat"/></svg><svg class="chev"><use href="#chev"/></svg></button>
              <input type="text" value="jupe.…" aria-label="Material name">
              <button class="gray c52">2</button>
              <button class="gray c43 dim" aria-label="Fake user"><svg class="icon"><use href="#shield"/></svg></button>
              <button class="gray c43" aria-label="New material"><svg class="icon"><use href="#copy"/></svg></button>
              <button class="gray c42" aria-label="Unlink"><svg class="icon"><use href="#x"/></svg></button>
            </div>
            <button class="box type" aria-label="Link"><svg class="icon"><use href="#mesh"/></svg><svg class="chev"><use href="#chev"/></svg></button>
          </div>
          <section class="panel"><h3><svg class="arr-r"><use href="#chev-r"/></svg>Preview<svg class="grip"><use href="#grip"/></svg></h3></section>
          <section class="panel surface"><h3><svg class="arr-d"><use href="#chev-d"/></svg>Surface<svg class="grip"><use href="#grip"/></svg></h3>
            <button class="use-nodes"><svg class="icon"><use href="#nodes"/></svg><span>Use Nodes</span></button>
          </section>
        </div>
      </div>
      <div class="scroll-v"></div>
    </section>
  </aside>
</div>
</body>
</html>
```
FILE: styles.css
```css
:root {
  --line: #3d3d3d;
  --blue: #4772b3;
  --gray: #545454;
  --text: #e2e2e2;
}
* { box-sizing: border-box; }
html, body { height: 100%; }
body {
  margin: 0;
  display: flex;
  flex-direction: column;
  gap: 7px;
  overflow: hidden;
  background: #161616;
  color: var(--text);
  font: 22px/26px "DejaVu Sans", sans-serif;
}
button, input, select, output { font: inherit; color: inherit; }
button { margin: 0; padding: 0; border: 0; background: none; display: flex; align-items: center; justify-content: center; white-space: nowrap; }
select { appearance: none; border: 0; padding: 0; margin: 0; background: none; flex: 1; min-width: 0; outline: 0; }
input { margin: 0; min-width: 0; }
ul { list-style: none; margin: 0; padding: 0; }
h2, h3 { margin: 0; font-weight: normal; font-size: inherit; }
svg { flex: none; display: block; }
.defs { position: absolute; width: 0; height: 0; }
.icon { width: 30px; height: 30px; flex: none; }
.chev { width: 16px; height: 16px; }
.tog { width: 13px; height: 13px; }
.grip { width: 22px; height: 10px; }
.s20 { width: 20px; height: 20px; }
.s17 { width: 17px; height: 13px; }
.dim { color: #9a9a9a; }
.orange { color: #c08048; }
.mint { color: #0fb084; }
.azure { color: #5f86d3; }
.rose { color: #b2585f; }

/* top bar */
.topbar { flex: none; height: 16px; display: flex; background: #1d1d1d; overflow: hidden; align-items: flex-end; }
.workspaces { flex: 1; display: flex; align-items: flex-end; min-width: 0; padding-left: 273px; }
.workspaces button { flex: none; color: #989898; }
.workspaces .menu-help { color: var(--text); width: 102px; padding-bottom: 11px; justify-content: flex-start; }
.workspaces .tab { padding: 0 20px 5px; margin-right: 5px; }
.workspaces .tab:last-child { padding-right: 0; margin-right: 0; }
.workspaces .tab-on { background: #303030; color: #fff; }
.top-group { display: flex; height: 42px; margin-bottom: 3px; border: 2px solid var(--line); border-radius: 8px; overflow: hidden; flex: none; }
.scene-group { width: 410px; }
.layer-group { width: 411px; margin: 0 17px 3px 10px; }
.cell { display: flex; align-items: center; justify-content: center; width: 42px; border-left: 2px solid var(--line); }
.cell-icon { width: 66px; border: 0; background: #282828; padding-right: 20px; }
.cell-dark { background: #1d1d1d; }
.cell-grow { flex: 1; }
.cell-end { justify-content: flex-end; padding-right: 16px; }
.cell-text { justify-content: flex-start; align-items: flex-start; padding: 4px 0 0 20px; }
.cell-gray { background: var(--gray); }
.cell-off { background: #3a3a3a; }

/* page frame */
.workspace { flex: 1; min-height: 0; display: grid; grid-template-columns: minmax(0, 1fr) 527px; gap: 7px; padding-right: 2px; }
.left { display: flex; flex-direction: column; gap: 8px; min-width: 0; min-height: 0; }
.right { display: grid; grid-template-rows: 541fr 459fr; gap: 8px; min-height: 0; }
.editor { flex: 1; min-height: 0; display: flex; flex-direction: column; background: #1d1d1d; border-radius: 0 16px 16px 0; overflow: hidden; }
.bottom { flex: none; height: 49px; display: grid; grid-template-columns: 592fr 408fr; gap: 9px; }

/* header bars */
.bar { display: flex; align-items: center; flex: none; height: 54px; overflow: hidden; }
.editor .bar { background: #232323; }
.bottom .bar { align-items: flex-start; padding-top: 6px; height: 49px; }
.dope { background: #303030; border-radius: 0 16px 0 0; }
.shader2 { background: #1d1d1d; border-radius: 16px 16px 0 0; padding-left: 14px; gap: 10px; }
.box { flex: none; height: 42px; background: #282828; border: 2px solid var(--line); border-radius: 8px; display: flex; align-items: center; }
.type { width: 68px; justify-content: space-between; padding: 0 4px 0 9px; }
.type-cut { width: 41px; border-left: 0; border-radius: 0 8px 8px 0; justify-content: flex-end; gap: 7px; padding-right: 4px; overflow: hidden; }
.type-end { width: 52px; margin-left: auto; border-right: 0; border-radius: 8px 0 0 8px; padding-left: 5px; gap: 10px; justify-content: flex-start; overflow: hidden; }
.sq { width: 43px; justify-content: center; }
.off { color: #6a6a6a; background: #353535; border-color: #353535; }
.drop { padding: 0 6px 0 8px; }
.object-drop { width: 195px; gap: 15px; }
.editor .object-drop { margin-left: 10px; }
.slot-drop { width: 170px; margin-left: 66px; padding-left: 16px; }
.menus { display: flex; gap: 34px; margin-left: 27px; flex: none; }
.shader2 .menus { margin-left: 18px; }
.dope .menus { gap: 35px; }
.menus button { color: #d8d8d8; }
.bottom .menus, .bottom .check { height: 42px; align-items: center; }
.check { display: flex; align-items: center; gap: 9px; margin-left: 28px; flex: none; color: #fff; white-space: nowrap; }
.shader2 .check { margin-left: 18px; }
.check input { appearance: none; width: 30px; height: 30px; background: var(--blue); border: 2px solid #454545; border-radius: 6px; display: grid; place-items: center; }
.check input::before { content: ""; width: 8px; height: 17px; margin-top: -5px; border: solid #fff; border-width: 0 4px 4px 0; transform: rotate(40deg); }
.group { overflow: hidden; }
.group > * { height: 100%; border-left: 2px solid var(--line); flex: none; }
.group > :first-child { border-left: 0; }
.group input { flex: 1; border-width: 0 0 0 2px; border-style: solid; background: #1d1d1d; padding: 0 0 0 14px; outline: 0; }
.gray { background: var(--gray); }
.blue { background: var(--blue); }
.c40 { width: 40px; }
.c42 { width: 42px; }
.c43 { width: 43px; }
.c52 { width: 52px; }
.c65, .c66 { width: 65px; gap: 8px; }
.group .rest { flex: 1; gap: 8px; }
.mat-group { width: 506px; margin-left: 11px; }
.mat-group input { padding-left: 16px; }
.pin-btn { margin: 0 40px 0 16px; color: #9a9a9a; }
.snap-group { width: 111px; margin-left: 10px; }
.over-group { width: 86px; margin-left: 10px; }
.back-group { width: 86px; margin-left: 10px; }
.search { background: #1d1d1d; padding-left: 9px; }
.search input { appearance: none; flex: 1; background: none; border: 0; outline: 0; height: 100%; }

.dope-drop { width: 186px; padding-left: 0; border-left: 0; border-radius: 0 8px 8px 0; }
.filter-group { width: 126px; margin-left: 50px; }
.funnel-btn { margin-left: 12px; padding-left: 5px; }
.auto-drop { flex: 1; margin-left: 10px; padding-left: 15px; border-right: 0; border-radius: 8px 0 0 8px; }

/* node canvas */
.canvas { position: relative; flex: 1; min-height: 0; }
.grid, .links { position: absolute; inset: 0; width: 100%; height: 100%; pointer-events: none; }
.crumbs { display: flex; align-items: center; position: relative; text-shadow: 0 1px 2px #000; }
.canvas .crumbs { padding: 32px 0 0; margin-left: -6px; }
.canvas .crumbs span { margin: 0 39px 0 19px; }
.canvas .crumbs .sep { margin-right: 20px; }
.sep { width: 11px; height: 20px; color: #b5b5b5; }
.preview { position: absolute; width: 128px; height: 129px; background: #b1b1b1; }
.preview-a { left: 520px; top: 219px; }
.preview-b { left: 798px; top: 241px; }
.preview-c { left: 1124px; top: 191px; background: #7a9cff; }

.node { position: absolute; background: #303030; border-radius: 5px; box-shadow: 0 0 0 1px #141414, 0 4px 10px 3px rgba(0, 0, 0, .5); font-size: 13px; line-height: 18px; text-shadow: 0 1px 2px #000; }
.principled { left: 440px; top: 352px; width: 287px; padding-bottom: 5px; }
.torgb { left: 778px; top: 373px; width: 168px; padding-bottom: 4px; }
.ramp { left: 1044px; top: 323px; width: 288px; padding-bottom: 4px; }
.output { left: 1382px; top: 341px; width: 168px; padding-bottom: 7px; }
.node h2 { height: 24px; display: flex; align-items: center; gap: 7px; padding: 0 0 3px 12px; border-radius: 5px 5px 0 0; margin-bottom: 4px; }
.node h2 svg { width: 12px; height: 8px; }
.green { background: #2b652b; }
.teal { background: #246283; }
.red { background: #3c1d26; }
.row { position: relative; height: 27px; display: flex; align-items: center; padding: 0 12px 0 13px; }
.out { justify-content: flex-end; padding-right: 14px; }
.sock { position: absolute; left: -7px; top: 7px; width: 13px; height: 13px; border: 1px solid #161616; border-radius: 50%; background: #a1a1a1; }
.so { left: auto; right: -7px; }
.g { background: #63c763; }
.y { background: #c7c729; }
.v { background: #6363c7; }
.inputs { padding-top: 4px; }
.pick { height: 24px; flex: 1; display: flex; align-items: center; border: 2px solid var(--line); border-radius: 5px; background: #282828; padding: 0 2px 0 8px; }
.pick svg { width: 12px; height: 12px; }
.tall { margin: 0 12px 6px; }
.first { margin-top: 11px; }
.principled .tall + .inputs { padding-top: 0; }
.row > .pick, .row > .field { margin-left: -1px; }
.field { display: grid; flex: 1; height: 24px; border: 2px solid var(--line); border-radius: 5px; overflow: hidden; }
.field > * { grid-area: 1 / 1; align-self: center; }
.field input { appearance: none; width: 100%; height: 100%; background: linear-gradient(var(--blue) 0 0) no-repeat 0 0 / var(--v) 100% var(--gray); }
.field input::-webkit-slider-thumb { appearance: none; width: 0; height: 0; }
.field label { padding-left: 17px; pointer-events: none; }
.field output { justify-self: end; padding-right: 14px; pointer-events: none; }
input[type="color"] { appearance: none; width: 152px; height: 23px; padding: 0; border: 2px solid #454545; border-radius: 5px; margin-left: auto; background: none; }
input[type="color"]::-webkit-color-swatch-wrapper { padding: 0; }
input[type="color"]::-webkit-color-swatch { border: 0; border-radius: 3px; }

.ramp-tools { display: flex; align-items: center; margin: 18px 13px 5px 17px; height: 24px; }
.ramp-tools button { width: 12px; height: 24px; margin-right: 19px; }
.ramp-tools button svg { width: 11px; height: 11px; }
.ramp-tools button .flat { height: 8px; width: 12px; }
.ramp-tools button:nth-child(2) { margin-right: 24px; }
.ramp-tools button:nth-child(3) { margin-right: 27px; }
.join-l { border-radius: 5px 0 0 5px; flex: 0 0 75px; }
.join-r { border-radius: 0 5px 5px 0; border-left: 0; padding-left: 8px; }
.ramp-band { width: 264px; height: 32px; margin: 0 12px 5px 10px; }
.ramp-fields { display: flex; gap: 10px; margin: 0 13px 7px 11px; }
.num { width: 77px; height: 24px; padding: 0; text-align: center; background: var(--gray); border: 2px solid var(--line); border-radius: 5px; text-shadow: inherit; }
.ramp .wide { display: block; width: calc(100% - 24px); height: 24px; margin: 0 13px 4px 11px; }
.output h2 { margin-bottom: 7px; }
.output .tall { margin-bottom: 4px; }

.scroll-v, .scroll-h { position: absolute; border-radius: 4px; background: #3a3a3a; }
.canvas .scroll-v { right: 5px; top: 20px; bottom: 32px; width: 7px; background: #2d2d2d; }
.canvas .scroll-h { left: -8px; right: 19px; bottom: 4px; height: 6px; background: #333; }
.side-tab { position: absolute; right: 0; top: 31px; width: 16px; height: 30px; background: #191919; z-index: 1; color: #a8a8a8; }
.side-tab svg { width: 10px; height: 16px; }

/* outliner */
.outliner { position: relative; background: #282828; border-radius: 16px; overflow: hidden; display: flex; flex-direction: column; min-height: 0; }
.outliner .bar { padding-left: 16px; gap: 10px; }
.outliner .search { width: 248px; margin-left: 23px; }
.tree { flex: 1; display: flex; flex-direction: column; min-height: 0; }
.tree li { flex: 1; min-height: 0; display: grid; grid-template-columns: minmax(0, 1fr) 43px 43px 43px; align-items: center; justify-items: center; padding: 0 21px 0 56px; background-color: #282828; }
.tree li:nth-child(even) { background-color: #2b2b2b; }
.tree .cut { flex: 0 0 10px; align-items: end; }
.cut svg { width: 200px; height: 3px; justify-self: start; margin-left: 78px; }
.tree .child { background-image: linear-gradient(#4c4c4c 0 0); background-repeat: no-repeat; background-size: 2px 100%; background-position: 61px 0; }
.tree .last { background-size: 2px 33px; }
.tree .start { background-position: 61px 10px; }
.name { display: flex; align-items: center; justify-self: stretch; height: 100%; overflow: hidden; }
.child .name { padding-left: 43px; }
.name .tog { margin-right: 22px; color: #c4c4c4; }
.name span { margin-left: 15px; padding-top: 4px; white-space: nowrap; color: #c8c8c8; }
.extra { margin: 0 13px 0 50px; }
.faded .name { opacity: .5; }
.mid { color: #b0b0b0; }
.low { color: #707070; }
.glyph { font: bold 58px/30px "Liberation Serif", serif; display: flex; align-items: flex-end; justify-content: center; padding-bottom: 5px; }
.thin { font: 200 50px/30px "DejaVu Sans", sans-serif; padding: 0 0 2px 4px; }
.tree input { appearance: none; width: 21px; height: 21px; border: 2px solid #9a9a9a; border-radius: 2px; display: grid; place-items: center; }
.tree input:checked { background: #e6e6e6; border-color: #e6e6e6; }
.tree input:checked::before { content: ""; width: 6px; height: 12px; margin-top: -4px; border: solid #282828; border-width: 0 3px 3px 0; transform: rotate(42deg); }
.outliner .scroll-v { right: 4px; bottom: 85px; width: 7px; height: 97px; }
.outliner .scroll-h { left: 17px; right: 96px; bottom: 4px; height: 6px; }

/* properties */
.props { position: relative; background: #303030; border-radius: 16px 16px 0 0; overflow: hidden; display: flex; flex-direction: column; min-height: 0; }
.props .bar { padding: 0 16px; height: 53px; justify-content: space-between; }
.props .search { width: 248px; margin-right: 22px; }
.props-body { flex: 1; min-height: 0; display: flex; }
.tabs { width: 59px; flex: none; background: #1a1a1a; display: flex; flex-direction: column; padding: 7px 0 0 17px; gap: 30px; align-items: flex-start; color: #a8a8a8; }
.tabs .apart { margin-top: 17px; }
.white { color: #e0e0e0; }
.panelset { flex: 1; min-width: 0; padding: 22px 14px 0 17px; text-shadow: 0 1px 2px #000; }
.panelset .crumbs { padding: 0 6px; height: 30px; margin-bottom: 39px; }
.panelset .crumbs span { margin: 0 29px 0 19px; }
.panelset .crumbs .sep { margin-right: 22px; }
.panelset .plain { margin-left: auto; color: #9a9a9a; }
.slots { display: flex; gap: 16px; margin-bottom: 11px; }
.list { flex: 1; height: auto; flex-direction: column; align-items: stretch; justify-content: space-between; background: #262626; padding: 10px; }
.list li { display: flex; align-items: center; gap: 17px; height: 39px; padding-left: 8px; margin-bottom: 5px; border-radius: 5px; color: #c5c5c5; }
.list li svg { width: 28px; height: 28px; }
.list .on { background: #4a4b51; color: #fff; }
.list-foot { display: flex; align-items: center; gap: 161px; padding-left: 13px; color: #c4c4c4; margin-bottom: 2px; }
.side { display: flex; flex-direction: column; gap: 13px; margin-bottom: 16px; }
.stack { width: 43px; height: 86px; flex-direction: column; overflow: hidden; background: var(--gray); }
.stack button { flex: 1; width: 100%; }
.stack button + button { border-top: 2px solid var(--line); }
.datablock { display: flex; justify-content: space-between; margin-bottom: 22px; }
.datablock .group { width: 351px; }
.panel { background: #3d3d3d; border-radius: 8px; margin-bottom: 4px; }
.panel h3 { height: 53px; display: flex; align-items: center; padding: 0 18px 0 18px; }
.panel .grip { margin-left: auto; color: #a8a8a8; }
.arr-r { width: 12px; height: 20px; margin: 0 14px 0 4px; color: #b5b5b5; }
.arr-d { width: 20px; height: 12px; margin-right: 10px; color: #b5b5b5; }
.surface { padding-bottom: 20px; }
.use-nodes { width: calc(100% - 38px); margin: 18px 19px 0; height: 38px; background: var(--blue); border-radius: 6px; color: #fff; padding-left: 8px; text-shadow: inherit; }
.use-nodes span { flex: 1; }
.props > .scroll-v { right: 4px; top: 73px; width: 7px; height: 282px; }
```
